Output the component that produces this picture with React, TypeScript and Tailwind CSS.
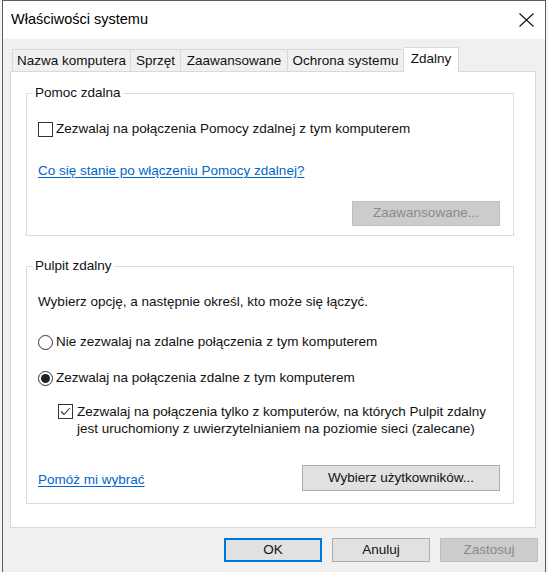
import React from "react";

const Checkbox = ({ checked }: { checked?: boolean }) => (
  <span className="w-[15px] h-[15px] shrink-0 border border-[#333] bg-white flex items-center justify-center">
    {checked && (
      <svg width="11" height="9" viewBox="0 0 11 9">
        <path d="M1 4.5 L4 7.5 L10 1" fill="none" stroke="#333" strokeWidth="1.1" />
      </svg>
    )}
  </span>
);

const Radio = ({ checked }: { checked?: boolean }) => (
  <span className="w-[15px] h-[15px] shrink-0 rounded-full border border-[#333] bg-white flex items-center justify-center">
    {checked && <span className="w-[9px] h-[9px] rounded-full bg-[#222]" />}
  </span>
);

const Button = ({
  children,
  className = "",
  disabled,
}: {
  children: React.ReactNode;
  className?: string;
  disabled?: boolean;
}) => (
  <button
    className={
      disabled
        ? `flex items-center justify-center bg-[#cccccc] border border-[#bfbfbf] text-[#8a8a8a] ${className}`
        : `flex items-center justify-center bg-[#e1e1e1] border border-[#adadad] text-[#111] ${className}`
    }
  >
    {children}
  </button>
);

const tabs = [
  { label: "Nazwa komputera", w: "w-[119px]" },
  { label: "Sprzęt", w: "w-[50px]" },
  { label: "Zaawansowane", w: "w-[107px]" },
  { label: "Ochrona systemu", w: "w-[116px]" },
];

export default function App() {
  return (
    <div className="w-[548px] h-[572px] overflow-hidden bg-[#f4f4f4] font-['Liberation_Sans',Arial,sans-serif] text-[13.5px] text-[#111]">
      <div className="ml-[2px] w-[544px] h-[600px] border-t border-l border-r border-[#5d5d5d] bg-[#f0f0f0]">
        {/* title bar */}
        <div className="h-[38px] bg-white flex items-center justify-between pl-[8px] pr-[11px]">
          <span className="text-[14.5px] text-black">Właściwości systemu</span>
          <svg width="15" height="14" viewBox="0 0 15 14">
            <path d="M0.5 0.5 L14.5 13.5 M14.5 0.5 L0.5 13.5" stroke="#111" strokeWidth="1.1" fill="none" />
          </svg>
        </div>

        <div className="pl-[7px] pr-[9px] pt-[8px]">
          {/* tabs */}
          <div className="flex items-end h-[24px] pl-[2px]">
            {tabs.map((t, i) => (
              <div
                key={t.label}
                className={`${t.w} h-[22px] bg-[#f0f0f0] border-t border-[#d9d9d9] ${
                  i === 0 ? "border-l" : ""
                } border-r flex items-center justify-center leading-none`}
              >
                {t.label}
              </div>
            ))}
            <div className="w-[55px] h-[25px] -mb-px relative z-10 bg-white border-t border-r border-[#d9d9d9] flex items-center justify-center pb-[3px] leading-none">
              Zdalny
            </div>
          </div>

          {/* panel */}
          <div className="h-[457px] bg-white border border-[#d9d9d9] pl-[15px] pr-[21px] pt-[13px]">
            <fieldset className="h-[151px] border border-[#dcdcdc] pl-[11px] pr-[13px]">
              <legend className="-ml-[5px] px-[2px] leading-[16px]">Pomoc zdalna</legend>
              <div className="mt-[18px] h-[20px] flex items-center gap-[3px]">
                <Checkbox />
                <span>Zezwalaj na połączenia Pomocy zdalnej z tym komputerem</span>
              </div>
              <div className="mt-[22px] h-[20px] flex items-center">
                <span className="text-[#0066cc] underline underline-offset-2">
                  Co się stanie po włączeniu Pomocy zdalnej?
                </span>
              </div>
              <div className="mt-[20px] flex justify-end">
                <Button disabled className="w-[148px] h-[25px]">
                  Zaawansowane...
                </Button>
              </div>
            </fieldset>

            <fieldset className="mt-[22px] h-[246px] border border-[#dcdcdc] pl-[11px] pr-[13px]">
              <legend className="-ml-[5px] px-[2px] leading-[16px]">Pulpit zdalny</legend>
              <div className="mt-[18px] h-[20px] flex items-center">
                Wybierz opcję, a następnie określ, kto może się łączyć.
              </div>
              <div className="mt-[20px] h-[20px] flex items-center gap-[3px]">
                <Radio />
                <span>Nie zezwalaj na zdalne połączenia z tym komputerem</span>
              </div>
              <div className="mt-[16px] h-[20px] flex items-center gap-[3px]">
                <Radio checked />
                <span>Zezwalaj na połączenia zdalne z tym komputerem</span>
              </div>
              <div className="mt-[15px] pl-[20px] flex items-start gap-[4px] leading-[17px]">
                <span className="mt-[1px]">
                  <Checkbox checked />
                </span>
                <span>
                  Zezwalaj na połączenia tylko z komputerów, na których Pulpit zdalny
                  <br />
                  jest uruchomiony z uwierzytelnianiem na poziomie sieci (zalecane)
                </span>
              </div>
              <div className="mt-[28px] flex items-center justify-between">
                <span className="text-[#0066cc] underline underline-offset-2 mt-[4px]">Pomóż mi wybrać</span>
                <Button className="w-[198px] h-[26px]">Wybierz użytkowników...</Button>
              </div>
            </fieldset>
          </div>

          {/* bottom buttons */}
          <div className="mt-[10px] flex justify-end gap-[10px] mr-[-2px]">
            <button className="w-[98px] h-[24px] bg-[#e1e1e1] border-2 border-[#0078d7] text-[#111] flex items-center justify-center">
              OK
            </button>
            <Button className="w-[98px] h-[24px]">Anuluj</Button>
            <Button disabled className="w-[98px] h-[24px]">
              Zastosuj
            </Button>
          </div>
        </div>
      </div>
    </div>
  );
}
